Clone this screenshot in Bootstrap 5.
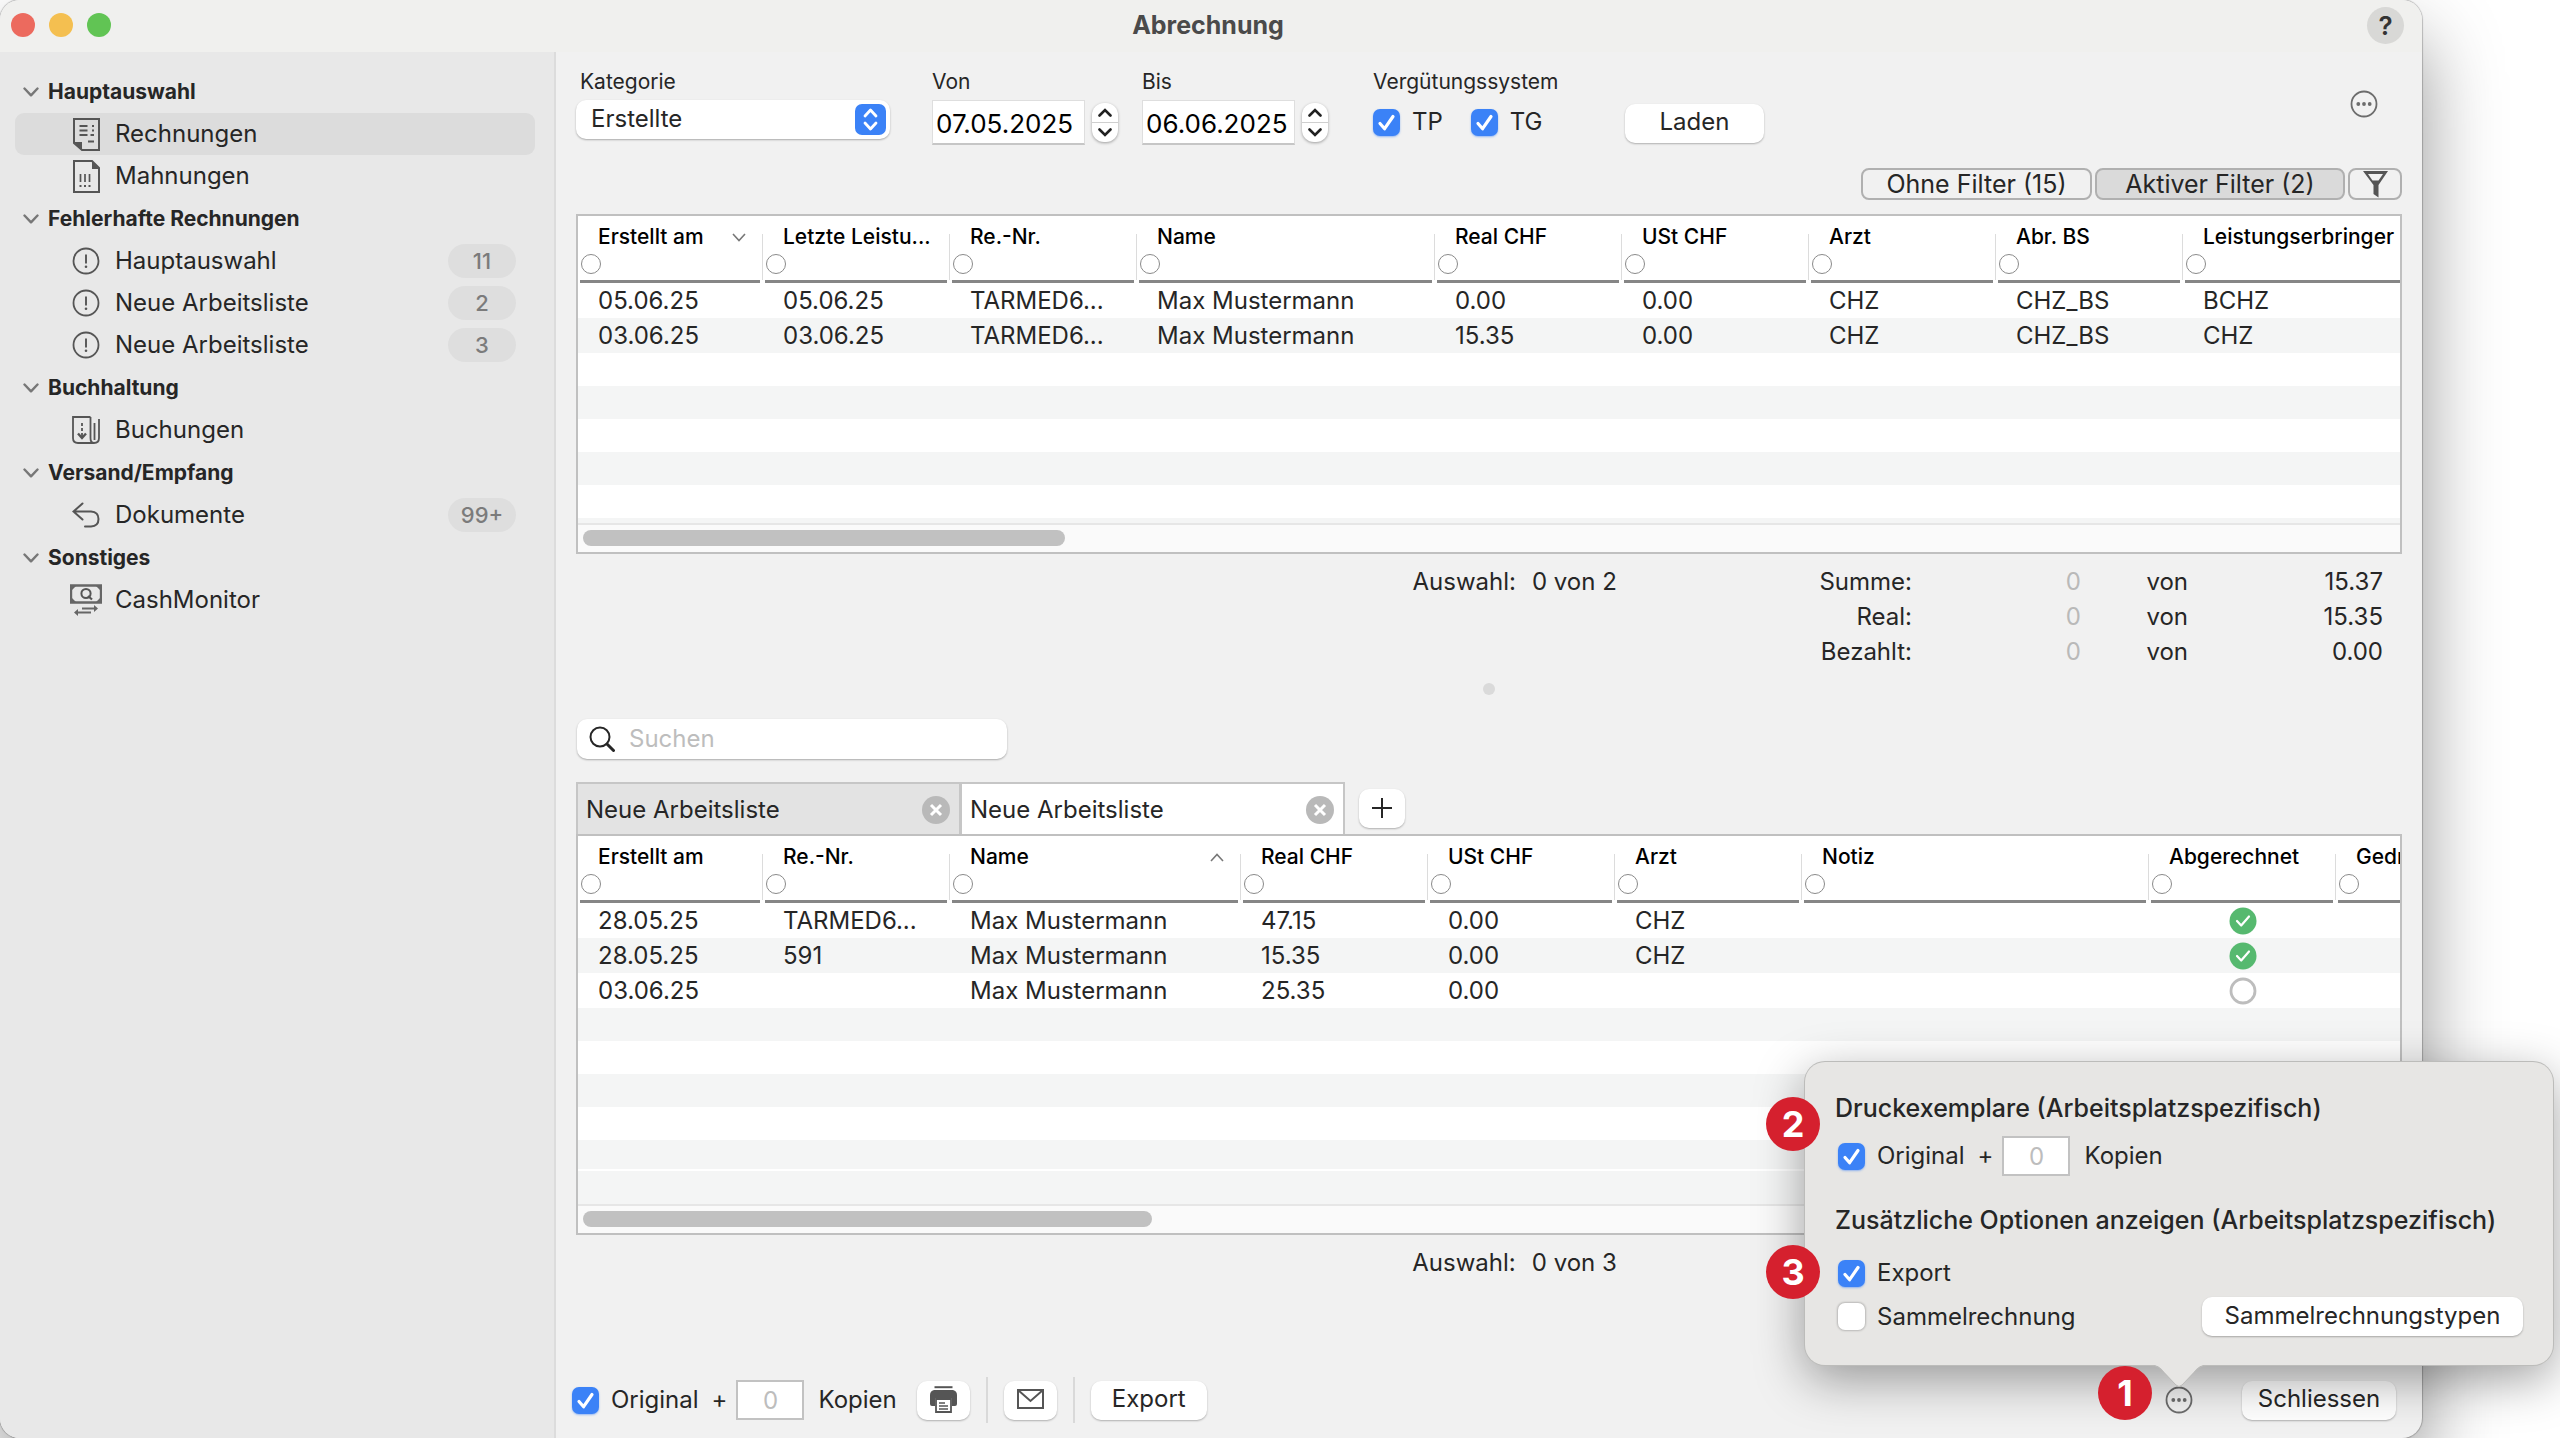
<!DOCTYPE html>
<html lang="de">
<head>
<meta charset="utf-8">
<meta name="viewport" content="width=device-width, initial-scale=1">
<title>Abrechnung</title>
<link href="https://cdn.jsdelivr.net/npm/bootstrap@5.3.0/dist/css/bootstrap.min.css" rel="stylesheet">
<style>
  body { font-family: Inter, "Liberation Sans", sans-serif; font-size: 24px; line-height: 34px; color: #262626; background: #fff; overflow: hidden; padding-right: 138px; }
  svg { display: block; flex: none; }
  .app-window { background: #f1f1f1; border-radius: 20px; box-shadow: 0 40px 80px rgba(0,0,0,.42), 0 0 1px 1px rgba(0,0,0,.22); }
  .titlebar { height: 52px; background: #f0f0ee; border-radius: 20px 20px 0 0; padding: 0 18px 2px 11px; }
  .lights { gap: 14px; }
  .light { width: 24px; height: 24px; border-radius: 50%; }
  .light-close { background: #ec6a5e; } .light-min { background: #f4bf50; } .light-max { background: #61c454; }
  .titlebar h1 { font-size: 25px; font-weight: 700; color: #4a4a4a; line-height: 34px; margin: 0; padding-right: 62px; }
  .help-btn { width: 37px; height: 37px; border: 0; border-radius: 50%; background: #d8d8d6; font-size: 26px; font-weight: 600; line-height: 37px; padding: 0; color: #333; }

  .sidebar { width: 556px; background: #e8e8e8; border-right: 2px solid #dcdcdc; border-radius: 0 0 0 20px; padding: 18px 19px 0 15px; }
  .side-head { height: 43px; padding-left: 8px; font-size: 21px; font-weight: 700; gap: 9px; }
  .side-item { height: 42px; padding: 0 19px 0 55px; gap: 13px; color: #262626; text-decoration: none; border-radius: 9px; }
  .side-item.active { background: #dcdcdc; }
  .side-icon { width: 32px; display: flex; justify-content: center; }
  .count-pill { width: 68px; height: 34px; border-radius: 17px; background: #dedede; color: #7b7b7b; font-size: 22px; font-weight: 500; }

  .main-pane { padding: 16px 20px 15px; }
  .toolbar-row { height: 100px; }
  .field-label { font-size: 21px; line-height: 28px; margin-bottom: 4px; display: block; }
  .ctl-row { height: 44px; }
  .grp-from { margin-left: 42px; } .grp-till { margin-left: 24px; }
  .grp-system { margin-left: 45px; width: 186px; }
  .grp-load { margin: 33px 0 0 66px; }
  .grp-more { margin-top: 22px; }
  .mac-select { width: 314px; height: 39px; border: 0; border-radius: 10px; background: #fff; padding: 0 48px 2px 15px; appearance: none; color: #262626; box-shadow: 0 1px 2px rgba(0,0,0,.3); }
  .select-knob { right: 4px; top: 4px; pointer-events: none; }
  .date-box { width: 153px; height: 45px; border: 1px solid #dedede; border-bottom: 2px solid #c6c6c6; background: #fff; padding: 3px 0 0 3px; color: #000; margin-right: 7px; font-size: 26px; }
  .stepper { width: 26px; height: 39px; border-radius: 12px; background: #fff; box-shadow: 0 1px 3px rgba(0,0,0,.35); overflow: hidden; }
  .stepper button { flex: 1; border: 0; background: none; padding: 0; display: flex; align-items: center; justify-content: center; }
  .stepper button + button { border-top: 1px solid #cfcfcf; }
  .mac-check.form-check-input { width: 27px; height: 27px; margin: 0; border: 0; border-radius: 7px; background-color: #fff; box-shadow: 0 0 2px 1px rgba(0,0,0,.2); flex: none; }
  .mac-check.form-check-input:checked { background-color: #3b82f7; box-shadow: 0 1px 2px rgba(59,130,247,.5); background-size: 27px 27px; background-image: url("data:image/svg+xml,%3Csvg xmlns='http://www.w3.org/2000/svg' viewBox='0 0 27 27'%3E%3Cpath d='M7 14.5l4.6 5.2L20 7.5' fill='none' stroke='%23fff' stroke-width='3.2' stroke-linecap='round' stroke-linejoin='round'/%3E%3C/svg%3E"); }
  .check-text { margin: 0 13px 0 12px; }
  .check-gap { margin-right: 28px; }
  .mac-btn { border: 0; border-radius: 10px; background: #fff; color: #262626; height: 39px; padding: 0 0 2px; box-shadow: 0 1px 2px rgba(0,0,0,.28); display: flex; align-items: center; justify-content: center; }
  .bare-btn { border: 0; background: none; padding: 0; }
  .w-load { width: 139px; } .w-icon { width: 53px; } .w-export { width: 116px; } .w-close { width: 154px; } .w-types { width: 321px; }
  .w-add { width: 46px; margin: 7px 0 0 14px; }
  .filter-bar { gap: 3px; margin-bottom: 14px; }
  .filter-btn { height: 32px; border: 2px solid #b0b0b0; border-radius: 8px; background: #f1f1f1; font-size: 25px; line-height: 24px; padding: 0; color: #262626; display: flex; align-items: center; justify-content: center; }
  .filter-btn.on { background: #dadada; }
  .w-all { width: 231px; } .w-active { width: 250px; } .w-funnel { width: 54px; }

  .grid-box { border: 2px solid #c0c0c0; background: #fff; overflow: hidden; }
  .data-grid { table-layout: fixed; width: 100%; border-collapse: collapse; margin: 0; white-space: nowrap; }
  .c-first { width: 185px; } .c-std { width: 187px; } .c-name { width: 298px; } .c-name-b { width: 291px; } .c-note { width: 347px; }
  .data-grid th { height: 67px; padding: 0; font-size: 21px; font-weight: 500; color: #000; vertical-align: top; overflow: hidden; background: linear-gradient(#dcdcdc,#dcdcdc) right 0 top 18px/1px 46px no-repeat; }
  .data-grid th:last-child { background: none; }
  .th-in { margin: 0 3px 0 2px; height: 67px; border-bottom: 3px solid #868686; padding-top: 7px; }
  .th-text { padding: 0 14px 0 18px; line-height: 28px; display: flex; justify-content: space-between; align-items: center; }
  th:last-child .th-text { padding-right: 0; }
  .dot-filter { appearance: none; display: block; width: 20px; height: 20px; border: 1px solid #8a8a8a; border-radius: 50%; background: #fff; margin: 3px 0 0 1px; }
  .data-grid td { height: 35px; padding: 0 0 0 20px; line-height: 34px; overflow: hidden; }
  .data-grid tbody tr:nth-child(even) { background: #f4f5f5; }
  .data-grid td.state { padding: 0; }
  .state svg { margin: 0 auto; }
  .stripes { background: repeating-linear-gradient(#fff 0 33px, #f4f5f5 33px 66px); }
  .stripes.odd-start { background: repeating-linear-gradient(#f4f5f5 0 33px, #fff 33px 66px); }
  .h-fill-a { height: 170px; } .h-fill-b { height: 161px; }
  .last-stripe { height: 35px; background: #f4f5f5; border-top: 2px solid #fff; }
  .scroll-track { height: 29px; border-top: 2px solid #e6e6e6; background: #fafafa; padding: 5px 5px 6px; }
  .scroll-thumb { height: 16px; border-radius: 8px; background: #c1c1c1; }
  .summary-row { line-height: 35px; margin-top: 10px; }
  .picked { flex: 0 0 57%; text-align: right; }
  .totals { display: grid; grid-template-columns: auto 169px 107px 195px; text-align: right; padding-right: 19px; }
  .dim { color: #b9b9b9; }
  .split-dot { width: 12px; height: 12px; border-radius: 50%; background: #dadada; margin: 14px auto 24px; }
  .search-box { width: 430px; height: 40px; background: #fff; border-radius: 10px; box-shadow: 0 1px 2px rgba(0,0,0,.3); padding: 0 12px; gap: 14px; margin-bottom: 23px; margin-left: 1px; }
  .search-box input { border: 0; outline: 0; background: none; flex: 1; min-width: 0; padding: 0; }
  .search-box input::placeholder { color: #bdbdbd; opacity: 1; }
  .tab-strip { height: 52px; }
  .work-tab { width: 385px; height: 54px; border: 2px solid #c6c6c6; border-bottom: 0; background: #e3e3e3; padding: 0 9px 0 8px; }
  .work-tab + .work-tab { margin-left: -1px; background: #fff; }

  .foot-bar { margin-left: -4px; margin-right: 6px; }
  .copies { width: 68px; height: 40px; border: 2px solid #c2c2c2; border-radius: 0; background: #fff; text-align: center; padding: 0; margin: 0 14px 0 9px; }
  .copies::placeholder { color: #bdbdbd; opacity: 1; }
  .copies-text { margin-right: 20px; }
  .foot-sep { width: 2px; height: 46px; background: #d9d9d9; margin: 0 16px; }
  .more-wrap { width: 28px; height: 28px; margin-right: 49px; }
  .pop { width: 748px; height: 303px; right: -360px; bottom: 49px; background: #e7e6e4; border-radius: 20px; padding: 29px 30px 28px; box-shadow: 0 0 0 1px #bcbcba, 0 14px 50px rgba(0,0,0,.38); z-index: 5; }
  .pop h2 { font-size: 25px; font-weight: 500; line-height: 34px; margin: 0; white-space: nowrap; }
  .pop-line { padding-left: 3px; }
  .pop-copies { margin: 11px 0 27px; }
  .pop-export { margin: 19px 0 7px; }
  .pop-tail { left: 346px; top: 302px; }
  .num-mark { width: 54px; height: 54px; border-radius: 50%; background: #d5202e; color: #fff; font-size: 36px; font-weight: 700; display: flex; align-items: center; justify-content: center; z-index: 6; }
  .mark-one { left: -67px; top: -20px; } .mark-two { left: -39px; top: 35px; } .mark-three { left: -39px; top: 183px; }
</style>
<script src="https://cdn.jsdelivr.net/npm/bootstrap@5.3.0/dist/js/bootstrap.bundle.min.js"></script>
</head>
<body class="vh-100">
<svg width="0" height="0" class="position-absolute" aria-hidden="true">
  <symbol id="chev" viewBox="0 0 16 10"><path d="M1.500 1.500 8 8.300l6.500-6.800" fill="none" stroke="#777" stroke-width="2.400" stroke-linecap="round" stroke-linejoin="round"/></symbol>
  <symbol id="sort" viewBox="0 0 14 9"><path d="M1 1l6 6.500L13 1" fill="none" stroke="#777" stroke-width="1.600"/></symbol>
  <symbol id="warn" viewBox="0 0 28 28"><circle cx="14" cy="14" r="12.500" fill="none" stroke="#555" stroke-width="1.800"/><path d="M14 7.500v9" stroke="#555" stroke-width="1.900"/><circle cx="14" cy="19.800" r="1.300" fill="#555"/></symbol>
  <symbol id="more" viewBox="0 0 28 28"><circle cx="14" cy="14" r="12.500" fill="none" stroke="#6c6c6c" stroke-width="1.800"/><g fill="#6c6c6c"><circle cx="8.300" cy="14" r="1.900"/><circle cx="14" cy="14" r="1.900"/><circle cx="19.700" cy="14" r="1.900"/></g></symbol>
  <symbol id="shut" viewBox="0 0 28 28"><circle cx="14" cy="14" r="14" fill="#b9b9b9"/><path d="M9 9l10 10M19 9L9 19" stroke="#fff" stroke-width="3"/></symbol>
  <symbol id="done" viewBox="0 0 28 28"><circle cx="14" cy="14" r="13.500" fill="#56b96f"/><path d="M8 14l4.200 4.500L20 9.500" fill="none" stroke="#fff" stroke-width="2.200" stroke-linecap="round" stroke-linejoin="round"/></symbol>
  <symbol id="up" viewBox="0 0 14 9"><path d="M1.500 7.500 7 2l5.500 5.500" fill="none" stroke="#222" stroke-width="2.600" stroke-linecap="round"/></symbol>
  <symbol id="down" viewBox="0 0 14 9"><path d="M1.500 1.500 7 7l5.500-5.500" fill="none" stroke="#222" stroke-width="2.600" stroke-linecap="round"/></symbol>
</svg>

<div class="app-window h-100 d-flex flex-column">
  <header class="titlebar d-flex align-items-center">
    <div class="lights d-flex">
      <span class="light light-close"></span><span class="light light-min"></span><span class="light light-max"></span>
    </div>
    <h1 class="flex-fill text-center">Abrechnung</h1>
    <button class="help-btn" type="button" aria-label="Hilfe">?</button>
  </header>

  <div class="d-flex flex-fill">
    <nav class="sidebar flex-shrink-0">
      <div class="side-head d-flex align-items-center"><svg width="16" height="10"><use href="#chev"/></svg>Hauptauswahl</div>
      <a href="#" class="side-item active d-flex align-items-center"><span class="side-icon"><svg width="27" height="33" viewBox="0 0 27 33"><path d="M1 1h25v31H9l-8-7z" fill="none" stroke="#555" stroke-width="2"/><path d="M1 24h8v8z" fill="#555"/><path d="M6.500 8h8M6.500 12.500h8M6.500 17h8M17.500 17h3.500M15 23.500h6" stroke="#555" stroke-width="2"/><path d="M19 8h2M19 12.500h2" stroke="#555" stroke-width="2"/></svg></span>Rechnungen</a>
      <a href="#" class="side-item d-flex align-items-center"><span class="side-icon"><svg width="27" height="33" viewBox="0 0 27 33"><path d="M1 1h18l7 7v24H1z" fill="none" stroke="#555" stroke-width="2"/><path d="M19 1v8h7z" fill="#555"/><path d="M7.500 14v8M12 14v8M16.500 14v8" stroke="#555" stroke-width="1.700"/><path d="M6.500 26h2M11 26h2M15.500 26h2" stroke="#555" stroke-width="2"/></svg></span>Mahnungen</a>

      <div class="side-head d-flex align-items-center"><svg width="16" height="10"><use href="#chev"/></svg>Fehlerhafte Rechnungen</div>
      <a href="#" class="side-item d-flex align-items-center"><span class="side-icon"><svg width="28" height="28"><use href="#warn"/></svg></span>Hauptauswahl<span class="count-pill ms-auto d-flex align-items-center justify-content-center">11</span></a>
      <a href="#" class="side-item d-flex align-items-center"><span class="side-icon"><svg width="28" height="28"><use href="#warn"/></svg></span>Neue Arbeitsliste<span class="count-pill ms-auto d-flex align-items-center justify-content-center">2</span></a>
      <a href="#" class="side-item d-flex align-items-center"><span class="side-icon"><svg width="28" height="28"><use href="#warn"/></svg></span>Neue Arbeitsliste<span class="count-pill ms-auto d-flex align-items-center justify-content-center">3</span></a>

      <div class="side-head d-flex align-items-center"><svg width="16" height="10"><use href="#chev"/></svg>Buchhaltung</div>
      <a href="#" class="side-item d-flex align-items-center"><span class="side-icon"><svg width="28" height="28" viewBox="0 0 28 28" fill="none" stroke="#555" stroke-width="1.800"><path d="M18.500 1H1v21q0 5 5 5h16q5 0 5-5V3M18.500 1v21q0 5 3.500 5M22.500 7v17"/><path d="M10 7v3M10 12v3M10 17v4"/><path d="M6 17.500l4 4.500 4-4.500" stroke-width="2.400"/></svg></span>Buchungen</a>

      <div class="side-head d-flex align-items-center"><svg width="16" height="10"><use href="#chev"/></svg>Versand/Empfang</div>
      <a href="#" class="side-item d-flex align-items-center"><span class="side-icon"><svg width="28" height="26" viewBox="0 0 28 26" fill="none" stroke="#555" stroke-width="2" stroke-linecap="round"><path d="M10.500 1.500 1.500 9.500l9 8M1.500 9.500h17.500q7.500.5 7.500 7.500t-7.500 7.500h-6"/></svg></span>Dokumente<span class="count-pill ms-auto d-flex align-items-center justify-content-center">99+</span></a>

      <div class="side-head d-flex align-items-center"><svg width="16" height="10"><use href="#chev"/></svg>Sonstiges</div>
      <a href="#" class="side-item d-flex align-items-center"><span class="side-icon"><svg width="32" height="32" viewBox="0 0 32 32"><path d="M1 1.500h30v17H1z" fill="none" stroke="#666" stroke-width="2.400"/><path d="M1 1h6L1 7zM31 1h-6l6 6zM1 19h6l-6-6zM31 19h-6l6-6z" fill="#666"/><circle cx="16" cy="9.500" r="4.600" fill="none" stroke="#555" stroke-width="2"/><path d="M18 12l4 3.500" stroke="#555" stroke-width="2.200"/><path d="M12 24.500h14M6 28.500h15" stroke="#666" stroke-width="2.200"/><path d="M24 21v7l4-3.500zM8 25v7l-4-3.500z" fill="#666"/></svg></span>CashMonitor</a>
    </nav>

    <main class="main-pane flex-fill d-flex flex-column">
      <div class="toolbar-row d-flex align-items-start">
        <div>
          <label class="field-label ps-1" for="cat">Kategorie</label>
          <div class="position-relative">
            <select id="cat" class="mac-select"><option>Erstellte</option></select>
            <svg class="select-knob position-absolute" width="31" height="31" viewBox="0 0 31 31"><rect width="31" height="31" rx="7" fill="#3b82f7"/><path d="M10 12l5.500-6 5.500 6M10 19l5.500 6 5.500-6" fill="none" stroke="#fff" stroke-width="2.800" stroke-linecap="round" stroke-linejoin="round"/></svg>
          </div>
        </div>
        <div class="grp-from">
          <label class="field-label" for="from">Von</label>
          <div class="ctl-row d-flex align-items-center">
            <input id="from" class="date-box" type="text" value="07.05.2025">
            <div class="stepper d-flex flex-column"><button type="button" aria-label="später"><svg width="14" height="9"><use href="#up"/></svg></button><button type="button" aria-label="früher"><svg width="14" height="9"><use href="#down"/></svg></button></div>
          </div>
        </div>
        <div class="grp-till">
          <label class="field-label" for="till">Bis</label>
          <div class="ctl-row d-flex align-items-center">
            <input id="till" class="date-box" type="text" value="06.06.2025">
            <div class="stepper d-flex flex-column"><button type="button" aria-label="später"><svg width="14" height="9"><use href="#up"/></svg></button><button type="button" aria-label="früher"><svg width="14" height="9"><use href="#down"/></svg></button></div>
          </div>
        </div>
        <div class="grp-system">
          <span class="field-label">Vergütungssystem</span>
          <div class="ctl-row d-flex align-items-center">
            <input id="tp" type="checkbox" class="form-check-input mac-check" checked><label for="tp" class="check-text check-gap">TP</label>
            <input id="tg" type="checkbox" class="form-check-input mac-check" checked><label for="tg" class="check-text">TG</label>
          </div>
        </div>
        <div class="grp-load ctl-row d-flex align-items-center"><button type="button" class="mac-btn w-load">Laden</button></div>
        <button type="button" class="grp-more bare-btn ms-auto me-4" aria-label="Mehr"><svg width="28" height="28"><use href="#more"/></svg></button>
      </div>

      <div class="filter-bar d-flex justify-content-end">
        <button type="button" class="filter-btn w-all">Ohne Filter (15)</button>
        <button type="button" class="filter-btn on w-active">Aktiver Filter (2)</button>
        <button type="button" class="filter-btn w-funnel" aria-label="Filter"><svg width="25" height="28" viewBox="0 0 25 28"><path d="M0 1h25l-9.500 14v12.500l-5-3.500v-9z" fill="#555"/><path d="M5 4h15l-4.500 6.500h-6z" fill="#f1f1f1"/></svg></button>
      </div>

      <div class="grid-box">
        <table class="data-grid">
          <colgroup><col class="c-first"><col class="c-std"><col class="c-std"><col class="c-name"><col class="c-std"><col class="c-std"><col class="c-std"><col class="c-std"><col></colgroup>
          <thead><tr>
            <th><div class="th-in"><div class="th-text">Erstellt am<svg width="14" height="9"><use href="#sort"/></svg></div><input type="radio" class="dot-filter" aria-label="Filter Erstellt am"></div></th>
            <th><div class="th-in"><div class="th-text">Letzte Leistu...</div><input type="radio" class="dot-filter" aria-label="Filter Letzte Leistung"></div></th>
            <th><div class="th-in"><div class="th-text">Re.-Nr.</div><input type="radio" class="dot-filter" aria-label="Filter Re.-Nr."></div></th>
            <th><div class="th-in"><div class="th-text">Name</div><input type="radio" class="dot-filter" aria-label="Filter Name"></div></th>
            <th><div class="th-in"><div class="th-text">Real CHF</div><input type="radio" class="dot-filter" aria-label="Filter Real CHF"></div></th>
            <th><div class="th-in"><div class="th-text">USt CHF</div><input type="radio" class="dot-filter" aria-label="Filter USt CHF"></div></th>
            <th><div class="th-in"><div class="th-text">Arzt</div><input type="radio" class="dot-filter" aria-label="Filter Arzt"></div></th>
            <th><div class="th-in"><div class="th-text">Abr. BS</div><input type="radio" class="dot-filter" aria-label="Filter Abr. BS"></div></th>
            <th><div class="th-in me-0"><div class="th-text">Leistungserbringer</div><input type="radio" class="dot-filter" aria-label="Filter Leistungserbringer"></div></th>
          </tr></thead>
          <tbody>
            <tr><td>05.06.25</td><td>05.06.25</td><td>TARMED6...</td><td>Max Mustermann</td><td>0.00</td><td>0.00</td><td>CHZ</td><td>CHZ_BS</td><td>BCHZ</td></tr>
            <tr><td>03.06.25</td><td>03.06.25</td><td>TARMED6...</td><td>Max Mustermann</td><td>15.35</td><td>0.00</td><td>CHZ</td><td>CHZ_BS</td><td>CHZ</td></tr>
          </tbody>
        </table>
        <div class="stripes h-fill-a"></div>
        <div class="scroll-track"><div class="scroll-thumb" style="width:26.6%"></div></div>
      </div>

      <div class="summary-row d-flex">
        <div class="picked">Auswahl:<span class="ms-3">0 von 2</span></div>
        <div class="totals ms-auto">
          <span>Summe:</span><span class="dim">0</span><span>von</span><span>15.37</span>
          <span>Real:</span><span class="dim">0</span><span>von</span><span>15.35</span>
          <span>Bezahlt:</span><span class="dim">0</span><span>von</span><span>0.00</span>
        </div>
      </div>
      <div class="split-dot"></div>

      <div class="search-box d-flex align-items-center">
        <svg width="26" height="26" viewBox="0 0 26 26" fill="none" stroke="#262626" stroke-linecap="round"><circle cx="11" cy="11" r="9.500" stroke-width="2"/><path d="M18 18l6.500 6.500" stroke-width="3"/></svg>
        <input type="text" placeholder="Suchen" aria-label="Suchen">
      </div>

      <div class="tab-strip d-flex">
        <div class="work-tab d-flex align-items-center justify-content-between">Neue Arbeitsliste<button type="button" class="bare-btn" aria-label="Schliessen"><svg width="28" height="28"><use href="#shut"/></svg></button></div>
        <div class="work-tab d-flex align-items-center justify-content-between">Neue Arbeitsliste<button type="button" class="bare-btn" aria-label="Schliessen"><svg width="28" height="28"><use href="#shut"/></svg></button></div>
        <button type="button" class="mac-btn w-add" aria-label="Neue Liste"><svg width="20" height="20" viewBox="0 0 20 20"><path d="M10 0v20M0 10h20" stroke="#262626" stroke-width="2"/></svg></button>
      </div>
      <div class="grid-box">
        <table class="data-grid">
          <colgroup><col class="c-first"><col class="c-std"><col class="c-name-b"><col class="c-std"><col class="c-std"><col class="c-std"><col class="c-note"><col class="c-std"><col></colgroup>
          <thead><tr>
            <th><div class="th-in"><div class="th-text">Erstellt am</div><input type="radio" class="dot-filter" aria-label="Filter Erstellt am"></div></th>
            <th><div class="th-in"><div class="th-text">Re.-Nr.</div><input type="radio" class="dot-filter" aria-label="Filter Re.-Nr."></div></th>
            <th><div class="th-in"><div class="th-text">Name<svg width="14" height="9" viewBox="0 0 14 9"><path d="M1 8l6-6.500L13 8" fill="none" stroke="#777" stroke-width="1.600"/></svg></div><input type="radio" class="dot-filter" aria-label="Filter Name"></div></th>
            <th><div class="th-in"><div class="th-text">Real CHF</div><input type="radio" class="dot-filter" aria-label="Filter Real CHF"></div></th>
            <th><div class="th-in"><div class="th-text">USt CHF</div><input type="radio" class="dot-filter" aria-label="Filter USt CHF"></div></th>
            <th><div class="th-in"><div class="th-text">Arzt</div><input type="radio" class="dot-filter" aria-label="Filter Arzt"></div></th>
            <th><div class="th-in"><div class="th-text">Notiz</div><input type="radio" class="dot-filter" aria-label="Filter Notiz"></div></th>
            <th><div class="th-in"><div class="th-text">Abgerechnet</div><input type="radio" class="dot-filter" aria-label="Filter Abgerechnet"></div></th>
            <th><div class="th-in me-0"><div class="th-text">Gedruckt</div><input type="radio" class="dot-filter" aria-label="Filter Gedruckt"></div></th>
          </tr></thead>
          <tbody>
            <tr><td>28.05.25</td><td>TARMED6...</td><td>Max Mustermann</td><td>47.15</td><td>0.00</td><td>CHZ</td><td></td><td class="state"><svg width="28" height="28"><use href="#done"/></svg></td><td></td></tr>
            <tr><td>28.05.25</td><td>591</td><td>Max Mustermann</td><td>15.35</td><td>0.00</td><td>CHZ</td><td></td><td class="state"><svg width="28" height="28"><use href="#done"/></svg></td><td></td></tr>
            <tr><td>03.06.25</td><td></td><td>Max Mustermann</td><td>25.35</td><td>0.00</td><td></td><td></td><td class="state"><svg width="28" height="28" viewBox="0 0 28 28"><circle cx="14" cy="14" r="12" fill="#fff" stroke="#bdbdbd" stroke-width="2.800"/></svg></td><td></td></tr>
          </tbody>
        </table>
        <div class="stripes odd-start h-fill-b"></div>
        <div class="last-stripe"></div>
        <div class="scroll-track"><div class="scroll-thumb" style="width:31.4%"></div></div>
      </div>
      <div class="summary-row d-flex"><div class="picked">Auswahl:<span class="ms-3">0 von 3</span></div></div>

      <footer class="foot-bar d-flex align-items-center mt-auto">
        <input id="orig" type="checkbox" class="form-check-input mac-check" checked>
        <label for="orig" class="check-text">Original</label>
        <label for="copies">+</label>
        <input id="copies" type="text" class="copies" placeholder="0">
        <span class="copies-text">Kopien</span>
        <button type="button" class="mac-btn w-icon" aria-label="Drucken"><svg width="27" height="27" viewBox="0 0 27 27"><path d="M4.500 1.200h18" stroke="#555" stroke-width="2"/><path d="M4 4h19q4 1 4 5v9q0 2-2 2h-3v-8H5v8H2q-2 0-2-2V9q0-4 4-5z" fill="#555"/><path d="M6 13h15v13H6z" fill="#fff" stroke="#555" stroke-width="1.800"/><path d="M9 17h6M9 20h9M9 23h9" stroke="#555" stroke-width="1.500"/></svg></button>
        <span class="foot-sep"></span>
        <button type="button" class="mac-btn w-icon" aria-label="E-Mail"><svg width="27" height="20" viewBox="0 0 27 20" fill="none" stroke="#555" stroke-width="2"><path d="M1 1h25v18H1zM1 1l12.500 11L26 1"/></svg></button>
        <span class="foot-sep"></span>
        <button type="button" class="mac-btn w-export">Export</button>

        <div class="more-wrap position-relative ms-auto">
          <button type="button" class="bare-btn" aria-label="Weitere Optionen"><svg width="28" height="28"><use href="#more"/></svg></button>
          <span class="num-mark mark-one position-absolute">1</span>
          <section class="pop position-absolute">
            <span class="num-mark mark-two position-absolute">2</span>
            <span class="num-mark mark-three position-absolute">3</span>
            <svg class="pop-tail position-absolute" width="56" height="24" viewBox="0 0 56 24"><path d="M0 0q8 1 13 8l12 13q3 3 6 0l12-13q5-7 13-8z" fill="#e7e6e4"/><path d="M0 1.500q8 0 13 7l12 12.500q3 3 6 0l12-12.500q5-7 13-7" fill="none" stroke="#bcbcba"/></svg>
            <h2>Druckexemplare (Arbeitsplatzspezifisch)</h2>
            <div class="pop-line pop-copies d-flex align-items-center">
              <input id="porig" type="checkbox" class="form-check-input mac-check" checked>
              <label for="porig" class="check-text">Original</label>
              <label for="pcopies">+</label>
              <input id="pcopies" type="text" class="copies" placeholder="0">
              <span>Kopien</span>
            </div>
            <h2>Zusätzliche Optionen anzeigen (Arbeitsplatzspezifisch)</h2>
            <div class="pop-line pop-export d-flex align-items-center">
              <input id="pexp" type="checkbox" class="form-check-input mac-check" checked>
              <label for="pexp" class="check-text">Export</label>
            </div>
            <div class="pop-line d-flex align-items-center">
              <input id="pcol" type="checkbox" class="form-check-input mac-check">
              <label for="pcol" class="check-text">Sammelrechnung</label>
              <button type="button" class="mac-btn w-types ms-auto">Sammelrechnungstypen</button>
            </div>
          </section>
        </div>
        <button type="button" class="mac-btn w-close">Schliessen</button>
      </footer>
    </main>
  </div>
</div>
</body>
</html>
